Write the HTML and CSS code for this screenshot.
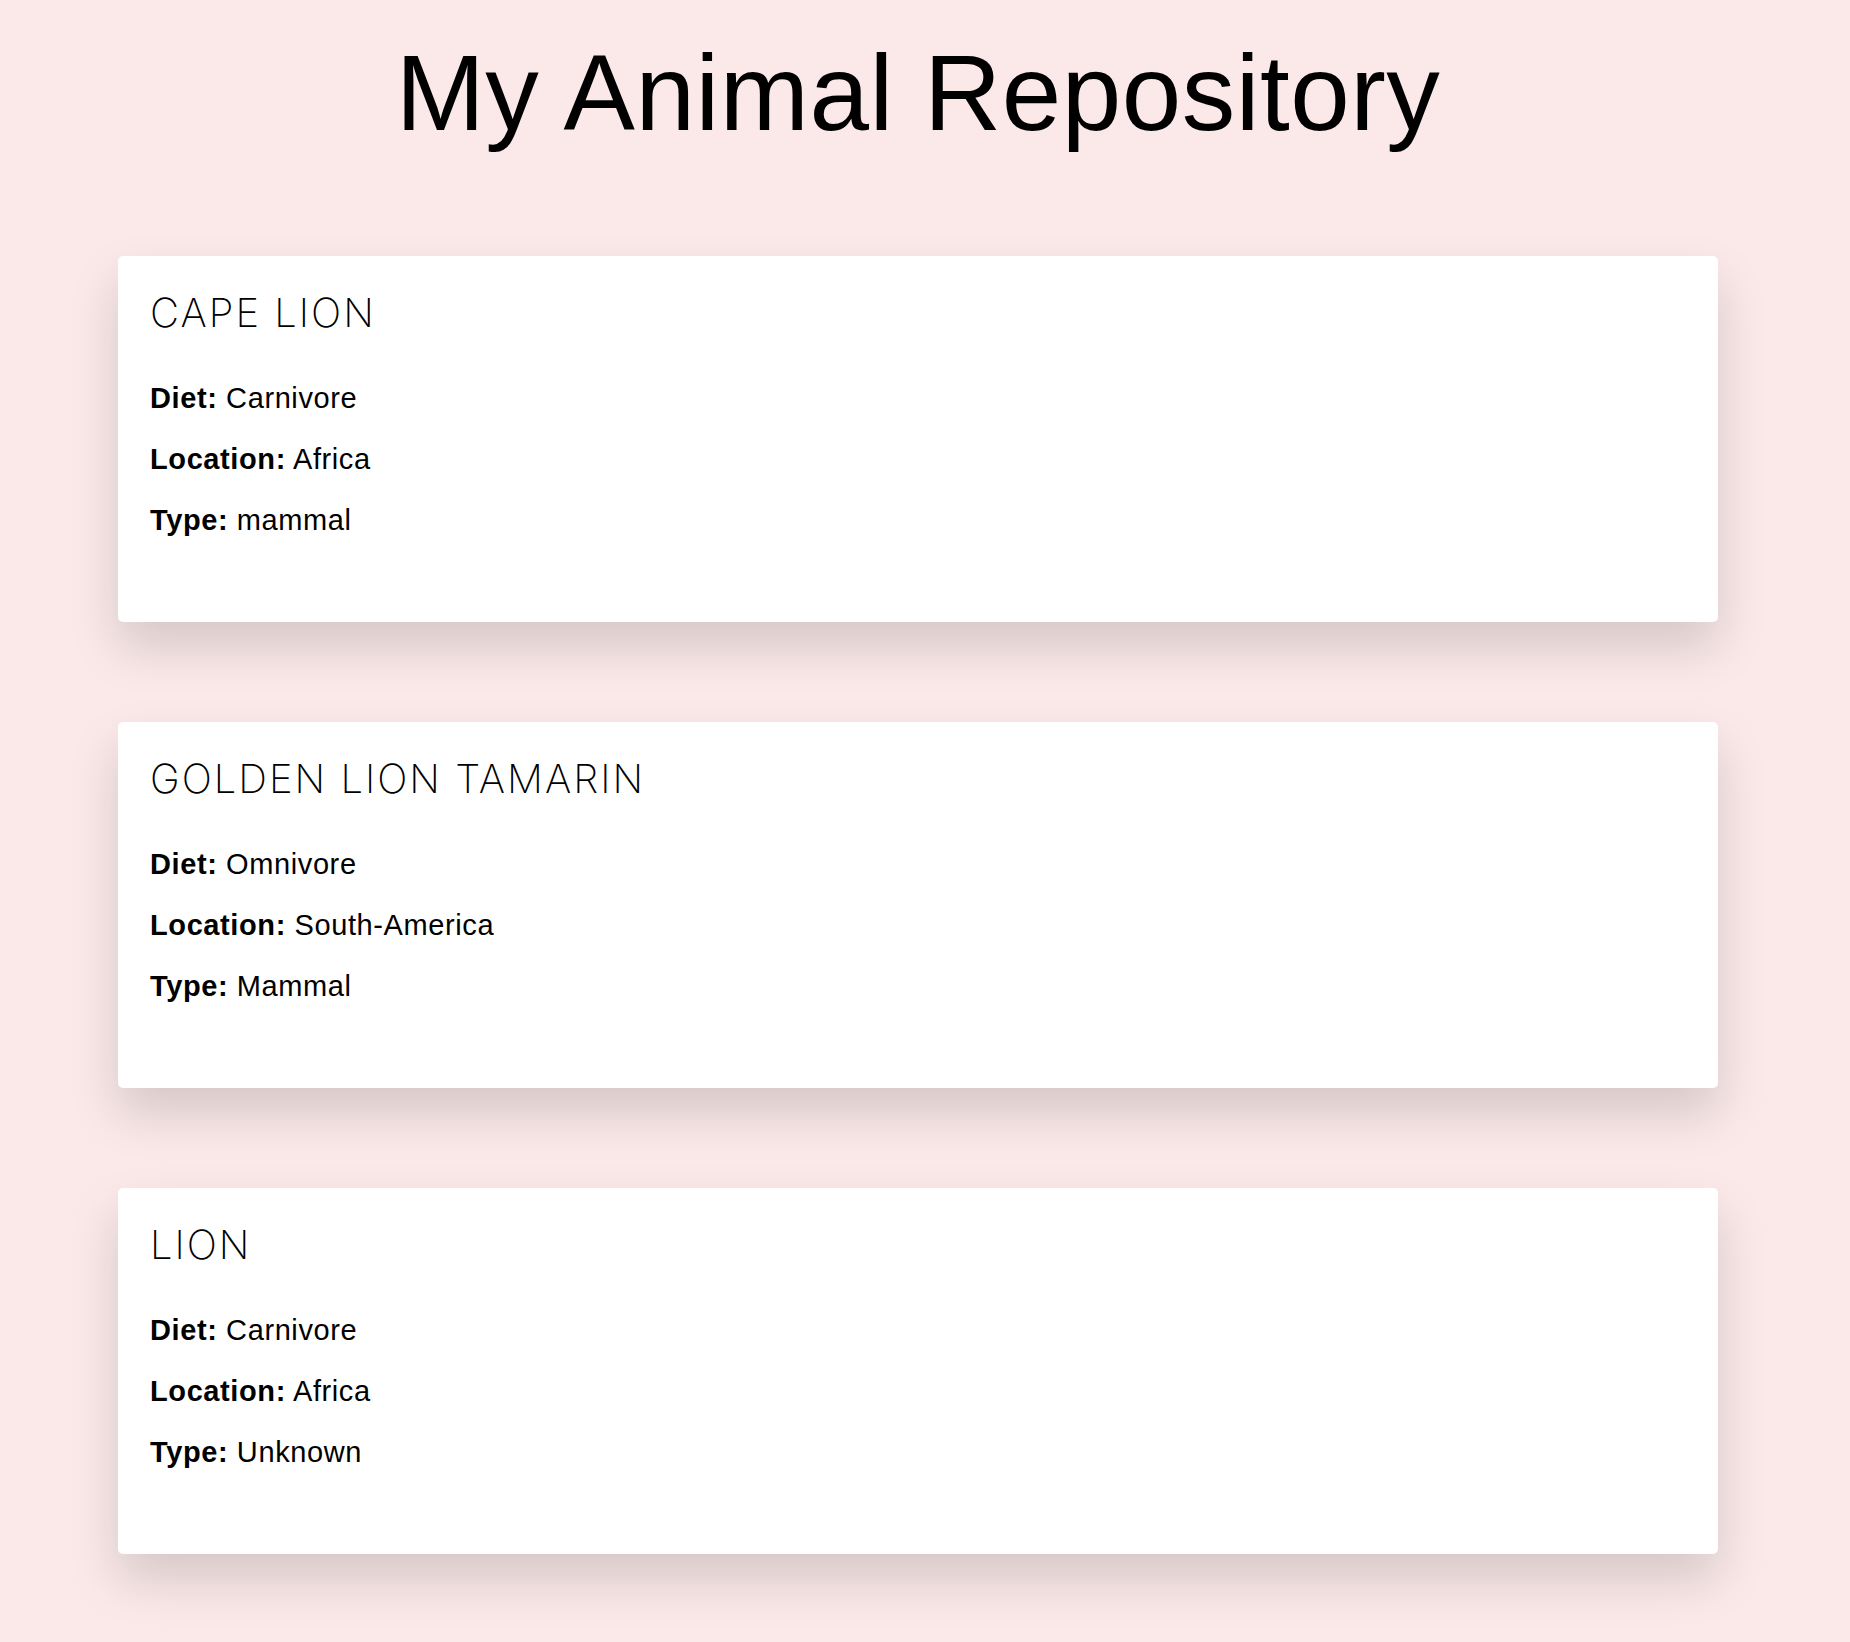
FILE: index.html
```html
<!DOCTYPE html>
<html lang="en">
<head>
<meta charset="utf-8">
<title>My Animal Repository</title>
<link rel="stylesheet" href="styles.css">
</head>
<body>
<div class="page">
  <h1 class="page-title">My Animal Repository</h1>
  <main class="animal-list">
    <section class="animal-card">
      <h2 class="animal-name">Cape Lion</h2>
      <div class="animal-facts">
        <p class="fact"><strong>Diet:</strong> Carnivore</p>
        <p class="fact"><strong>Location:</strong> Africa</p>
        <p class="fact"><strong>Type:</strong> mammal</p>
      </div>
    </section>
    <section class="animal-card">
      <h2 class="animal-name">Golden Lion Tamarin</h2>
      <div class="animal-facts">
        <p class="fact"><strong>Diet:</strong> Omnivore</p>
        <p class="fact"><strong>Location:</strong> South-America</p>
        <p class="fact"><strong>Type:</strong> Mammal</p>
      </div>
    </section>
    <section class="animal-card">
      <h2 class="animal-name">Lion</h2>
      <div class="animal-facts">
        <p class="fact"><strong>Diet:</strong> Carnivore</p>
        <p class="fact"><strong>Location:</strong> Africa</p>
        <p class="fact"><strong>Type:</strong> Unknown</p>
      </div>
    </section>
  </main>
</div>
</body>
</html>
```
FILE: styles.css
```css
html, body {
  margin: 0;
  padding: 0;
}
body {
  background: #fbe9e9;
  color: #000;
  font-family: "Liberation Sans", Arial, sans-serif;
}
.page {
  padding: 0 132px 120px 118px;
}
.page-title {
  margin: 32px 0 101px;
  text-align: center;
  font-size: 107px;
  font-weight: 400;
  line-height: 123px;
  letter-spacing: 0.5px;
}
.animal-list {
  display: flex;
  flex-direction: column;
  gap: 100px;
}
.animal-card {
  background: #fff;
  border-radius: 5px;
  padding: 33px 32px 85px;
  box-shadow: 0 25px 50px rgba(0, 0, 0, 0.15);
}
.animal-name {
  margin: 0 0 45px;
  font-family: "Inter", "Liberation Sans", sans-serif;
  font-weight: 200;
  font-size: 40px;
  line-height: 48px;
  text-transform: uppercase;
  letter-spacing: 2px;
}
.animal-facts {
  display: flex;
  flex-direction: column;
  gap: 28px;
}
.fact {
  margin: 0;
  font-size: 29px;
  line-height: 33px;
  letter-spacing: 0.6px;
}
.fact strong {
  font-weight: 700;
}
```
